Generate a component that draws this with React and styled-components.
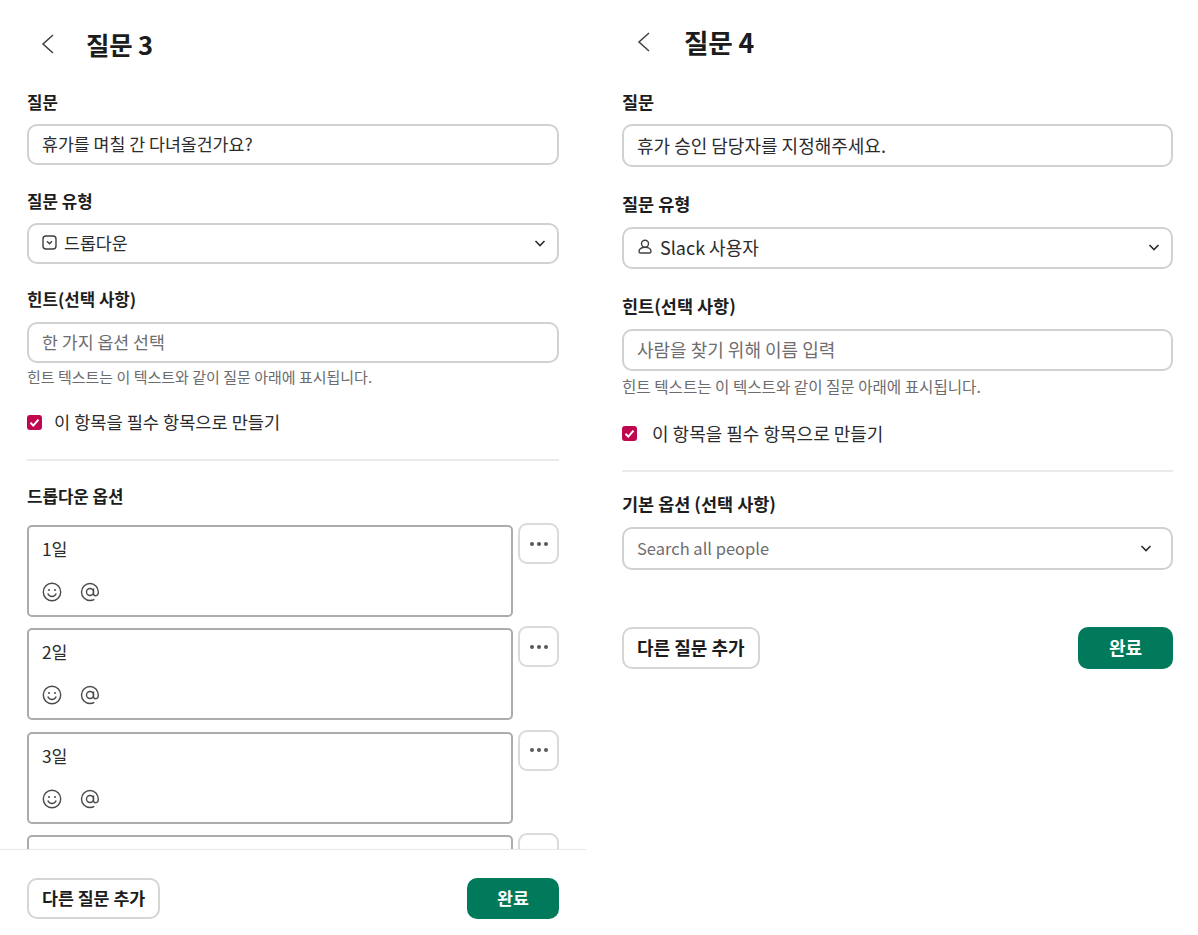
import React from "react";
import styled, { createGlobalStyle } from "styled-components";

const GlobalStyle = createGlobalStyle`
  * {
    box-sizing: border-box;
    margin: 0;
    padding: 0;
  }

  html, body {
    height: 935px;
    overflow: hidden;
    background: #ffffff;
  }

  body {
    font-family: "Noto Sans CJK KR", "Noto Sans", sans-serif;
    color: #1d1c1d;
  }
`;

const Page = styled.div`
  display: flex;
  width: 1198px;
  height: 935px;
`;

// 두 패널은 글자 크기가 조금 다르다
const LeftPanel = styled.section`
  --text: 17.3px;
  --check: 17.6px;
  --label: 16.8px;
  --hint: 15px;
  --title: 25.5px;
  --check-gap: 12px;
  display: flex;
  flex-direction: column;
  width: 586px;
  height: 935px;
`;

const RightPanel = styled.section`
  --text: 18px;
  --check: 18px;
  --label: 17.5px;
  --hint: 15.6px;
  --title: 26.7px;
  --check-gap: 15px;
  width: 612px;
  padding: 0 25px 0 36px;
`;

const ScrollArea = styled.div`
  flex: 1;
  min-height: 0;
  overflow: hidden;
  padding: 0 27px;
`;

const Header = styled.header`
  display: flex;
  align-items: center;
  height: ${({ $tall }) => $tall}px;
  padding-left: ${({ $left }) => $left}px;
  gap: ${({ $gap }) => $gap}px;
`;

const BackIcon = styled.svg`
  width: 16px;
  height: 24px;
  fill: none;
  stroke: #3f3e40;
  stroke-width: 1.5;
  flex: none;
`;

const Title = styled.h1`
  font-size: var(--title);
  font-weight: 700;
  line-height: 30px;
  letter-spacing: -0.2px;
`;

const Label = styled.div`
  font-size: var(--label);
  font-weight: 700;
  line-height: 22px;
  margin-top: ${({ $top }) => $top}px;
  margin-bottom: ${({ $bottom }) => $bottom}px;
`;

const Field = styled.div`
  display: flex;
  align-items: center;
  justify-content: space-between;
  height: ${({ $h }) => $h}px;
  padding: 0 ${({ $right = 10 }) => $right}px 2px 13px;
  border: 2px solid #d2d1d2;
  border-radius: 10px;
  font-size: var(--text);
  color: ${({ $muted }) => ($muted ? "#6e6d6f" : "#2c2b2d")};
  background: #ffffff;
`;

const FieldValue = styled.span`
  display: flex;
  align-items: center;
  gap: 7px;
`;

const LatinText = styled.span`
  font-size: 16.5px;
`;

const Hint = styled.p`
  font-size: var(--hint);
  line-height: 20px;
  color: #6c6b6d;
  margin-top: ${({ $top }) => $top}px;
`;

const CheckRow = styled.div`
  display: flex;
  align-items: center;
  gap: var(--check-gap);
  font-size: var(--check);
  line-height: 24px;
  color: #2c2b2d;
  margin-top: ${({ $top }) => $top}px;
`;

const CheckBox = styled.span`
  display: flex;
  align-items: center;
  justify-content: center;
  width: 15px;
  height: 15px;
  border-radius: 3px;
  background: #c0064f;
  flex: none;
`;

const Divider = styled.hr`
  border: 0;
  height: 2px;
  background: #ebebeb;
  margin-top: ${({ $top }) => $top}px;
`;

const OptionList = styled.div`
  display: flex;
  flex-direction: column;
  gap: 9.33px;
`;

const OptionRow = styled.div`
  display: flex;
  align-items: flex-start;
  gap: 5px;
`;

const OptionBox = styled.div`
  display: flex;
  flex-direction: column;
  justify-content: space-between;
  width: 487px;
  height: 92px;
  margin-top: 2px;
  padding: 10px 13px 13px;
  border: 2px solid #acabad;
  border-radius: 5px;
  font-size: var(--text);
  line-height: 24px;
  color: #2c2b2d;
`;

const OptionTools = styled.div`
  display: flex;
  align-items: center;
  gap: 18px;
  color: #4a494b;
`;

const MoreButton = styled.button`
  display: flex;
  align-items: center;
  justify-content: center;
  gap: 3px;
  width: 41px;
  height: 41px;
  border: 2px solid #dbdadb;
  border-radius: 9px;
  background: #ffffff;
`;

const Dot = styled.i`
  width: 4px;
  height: 4px;
  border-radius: 50%;
  background: #59585a;
`;

const Footer = styled.footer`
  display: flex;
  align-items: flex-start;
  justify-content: space-between;
  height: 86px;
  padding: 28px 27px 0;
  border-top: 1.5px solid #e8e8e8;
`;

const ButtonRow = styled.div`
  display: flex;
  align-items: center;
  justify-content: space-between;
  margin-top: 57px;
`;

const Button = styled.button`
  height: ${({ $h }) => $h}px;
  padding: 0 13px 2px;
  border: 2px solid #d6d5d6;
  border-radius: 10px;
  background: #ffffff;
  color: #1d1c1d;
  font-family: inherit;
  font-size: var(--text);
  font-weight: 700;
`;

const DoneButton = styled(Button)`
  width: ${({ $w }) => $w}px;
  border: 0;
  background: #007a5a;
  color: #ffffff;
`;

const Chevron = () => (
  <svg width="14" height="14" viewBox="0 0 14 14" fill="none" stroke="#2c2b2d" strokeWidth="1.6">
    <path d="M2.5 5l4.5 4.500L11.500 5" />
  </svg>
);

const Back = () => (
  <BackIcon viewBox="0 0 16 24">
    <path d="M13 3L3 12l10 9" />
  </BackIcon>
);

const Check = () => (
  <svg width="11" height="11" viewBox="0 0 11 11" fill="none" stroke="#fff" strokeWidth="2">
    <path d="M1.500 5.800l2.800 2.800 5.200-6" />
  </svg>
);

const DropdownIcon = () => (
  <svg width="15" height="15" viewBox="0 0 15 15" fill="none" stroke="#3f3e40" strokeWidth="1.4">
    <rect x="1" y="1" width="13" height="13" rx="3" />
    <path d="M5 6.300l2.500 2.500L10 6.300" />
  </svg>
);

const UserIcon = () => (
  <svg width="16" height="16" viewBox="0 0 16 16" fill="none" stroke="#3f3e40" strokeWidth="1.4">
    <circle cx="8" cy="4.800" r="3.500" />
    <path d="M8 8.300c-3.200 0-6 1.600-6 4.100 0 1 .7 1.600 1.600 1.600h8.800c.9 0 1.600-.6 1.600-1.600 0-2.500-2.800-4.100-6-4.100z" />
  </svg>
);

const SmileIcon = () => (
  <svg width="20" height="20" viewBox="0 0 20 20" fill="none" stroke="currentColor" strokeWidth="1.4">
    <circle cx="10" cy="10" r="8.700" />
    <circle cx="7" cy="8" r="1" fill="currentColor" stroke="none" />
    <circle cx="13" cy="8" r="1" fill="currentColor" stroke="none" />
    <path d="M5.800 11.500c.8 2 2.300 3 4.200 3s3.400-1 4.200-3" />
  </svg>
);

const AtIcon = () => (
  <svg width="20" height="20" viewBox="0 0 20 20" fill="none" stroke="currentColor" strokeWidth="1.4">
    <circle cx="10" cy="10" r="3.500" />
    <path d="M13.500 6.500v5c0 1.300.9 2.200 2.200 2.200s2.600-1.100 2.600-3.700C18.300 5.400 14.600 1.500 10 1.500S1.500 5.300 1.500 10s3.800 8.500 8.500 8.500c1.700 0 3.100-.4 4.300-1.200" />
  </svg>
);

const options = ["1일", "2일", "3일", ""];

const App = () => {
  return (
    <>
      <GlobalStyle />
      <Page>
        <LeftPanel>
          <ScrollArea>
            <Header $tall={88} $left={13} $gap={30}>
              <Back />
              <Title>질문 3</Title>
            </Header>
            <Label $top={3} $bottom={11}>질문</Label>
            <Field $h={41}>휴가를 며칠 간 다녀올건가요?</Field>
            <Label $top={25} $bottom={11}>질문 유형</Label>
            <Field $h={41}>
              <FieldValue><DropdownIcon />드롭다운</FieldValue>
              <Chevron />
            </Field>
            <Label $top={24} $bottom={12}>힌트(선택 사항)</Label>
            <Field $h={41} $muted>한 가지 옵션 선택</Field>
            <Hint $top={4}>힌트 텍스트는 이 텍스트와 같이 질문 아래에 표시됩니다.</Hint>
            <CheckRow $top={23}>
              <CheckBox><Check /></CheckBox>
              이 항목을 필수 항목으로 만들기
            </CheckRow>
            <Divider $top={25} />
            <Label $top={24} $bottom={16}>드롭다운 옵션</Label>
            <OptionList>
              {options.map((name, i) => (
                <OptionRow key={i}>
                  <OptionBox>
                    <span>{name}</span>
                    <OptionTools><SmileIcon /><AtIcon /></OptionTools>
                  </OptionBox>
                  <MoreButton><Dot /><Dot /><Dot /></MoreButton>
                </OptionRow>
              ))}
            </OptionList>
          </ScrollArea>
          <Footer>
            <Button $h={41}>다른 질문 추가</Button>
            <DoneButton $h={41} $w={92}>완료</DoneButton>
          </Footer>
        </LeftPanel>
        <RightPanel>
          <Header $tall={84} $left={14} $gap={32}>
            <Back />
            <Title>질문 4</Title>
          </Header>
          <Label $top={7} $bottom={11}>질문</Label>
          <Field $h={43}>휴가 승인 담당자를 지정해주세요.</Field>
          <Label $top={26} $bottom={12}>질문 유형</Label>
          <Field $h={42}>
            <FieldValue><UserIcon />Slack 사용자</FieldValue>
            <Chevron />
          </Field>
          <Label $top={26} $bottom={12}>힌트(선택 사항)</Label>
          <Field $h={42} $muted>사람을 찾기 위해 이름 입력</Field>
          <Hint $top={5}>힌트 텍스트는 이 텍스트와 같이 질문 아래에 표시됩니다.</Hint>
          <CheckRow $top={25}>
            <CheckBox><Check /></CheckBox>
            이 항목을 필수 항목으로 만들기
          </CheckRow>
          <Divider $top={25} />
          <Label $top={21} $bottom={12}>기본 옵션 (선택 사항)</Label>
          <Field $h={43} $muted $right={18}>
            <LatinText>Search all people</LatinText>
            <Chevron />
          </Field>
          <ButtonRow>
            <Button $h={42}>다른 질문 추가</Button>
            <DoneButton $h={42} $w={95}>완료</DoneButton>
          </ButtonRow>
        </RightPanel>
      </Page>
    </>
  );
};

export default App;
